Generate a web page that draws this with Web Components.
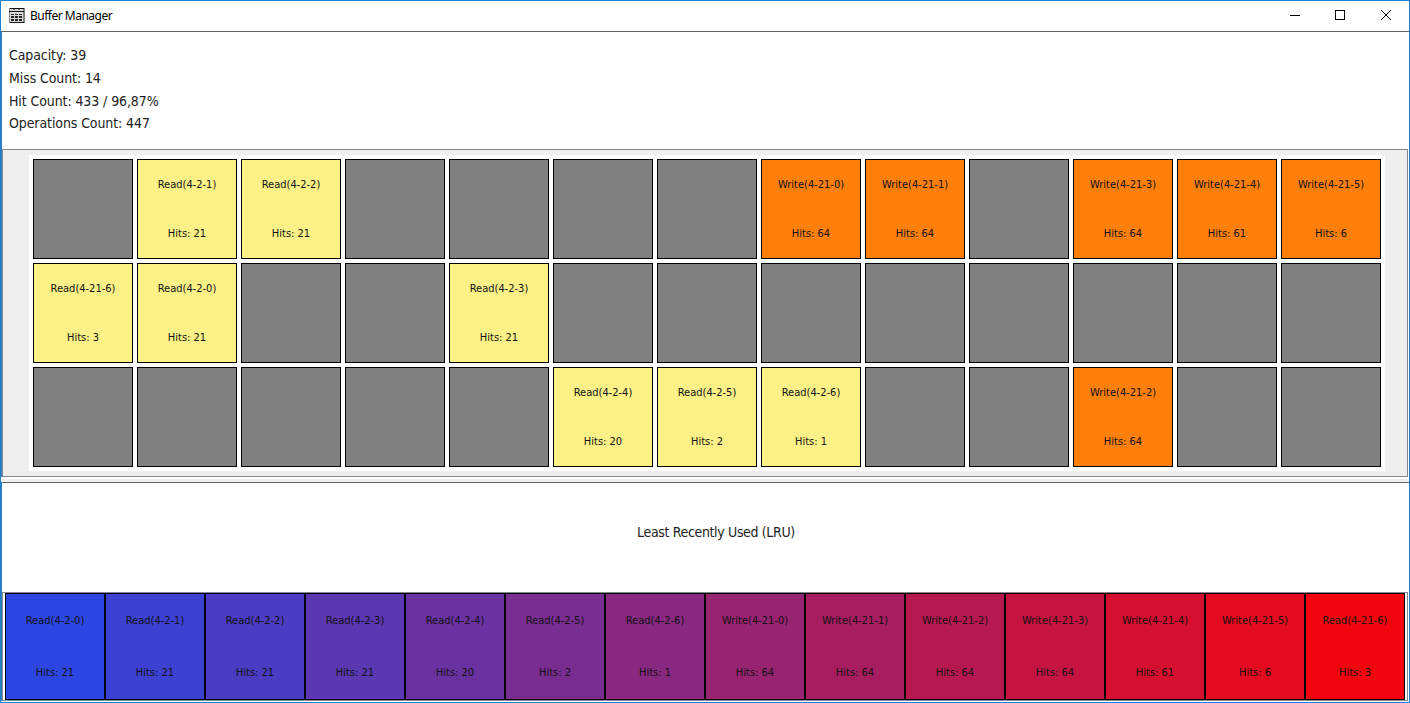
<!DOCTYPE html>
<html lang="en"><head><meta charset="utf-8"><title>Buffer Manager</title>
<style>html,body{margin:0;height:100%;overflow:hidden;background:#fff}</style></head>
<body><buffer-window></buffer-window>
<script>
const FONT = '"DejaVu Sans Condensed","DejaVu Sans",sans-serif';
function define(name, html, init){
  const t = document.createElement('template');
  t.innerHTML = html;
  customElements.define(name, class extends HTMLElement{
    connectedCallback(){
      if(this.shadowRoot) return;
      this.attachShadow({mode:'open'}).append(t.content.cloneNode(true));
      if(init) init(this, this.shadowRoot);
    }
  });
}
define('title-bar', `<style>
:host{display:flex;height:30px;align-items:center;padding:0 13px 0 8px;background:#fff;font:12px "Noto Sans",sans-serif;color:#000;box-sizing:border-box}
.t{flex:1;margin-left:5px;letter-spacing:-.5px;line-height:16px;white-space:nowrap}
svg{display:block}.b{display:flex}.b svg + svg{margin-left:29px}.b svg:last-child{margin-left:30px}
</style>
<svg width="16" height="16" viewBox="0 0 16 16" shape-rendering="crispEdges"><path fill="#808080" d="M0 0h16v15H0z"/><path fill="#ddd" d="M1 1h13v13H1z"/><path fill="#111" d="M1 0h14v1H1zM0 3h15v1H0zM1 14h14v1H1z"/><path fill="#666" d="M4 1h2v1H4zM9 1h2v1H9z"/><path fill="#222" d="M2 6h3v1H2zM6 6h3v1H6zM10 6h3v1h-3zM2 8h3v2H2zM6 8h3v2H6zM10 8h3v2h-3zM2 11h3v2H2zM6 11h3v2H6zM10 11h3v2h-3z"/></svg>
<span class="t"><slot></slot></span>
<div class="b">
<svg width="16" height="16"><path d="M1 7.5h10" stroke="#000" shape-rendering="crispEdges"/></svg>
<svg width="16" height="16"><path d="M1.5 2.5h9v9h-9z" fill="none" stroke="#000" shape-rendering="crispEdges"/></svg>
<svg width="16" height="16"><path d="M1 2l10 10M11 2L1 12" fill="none" stroke="#000"/></svg>
</div>`);
define('stats-panel', `<style>
:host{display:block;height:117px;box-sizing:border-box;padding:12px 0 0 7px;background:#fff}
</style><slot></slot>`);
define('stat-line', `<style>
:host{display:block;font:14px/22.8px ${FONT};color:#222;white-space:nowrap;letter-spacing:-.1px}
</style><slot></slot>`);
define('buffer-cell', `<style>
:host{display:flex;flex-direction:column;align-items:center;box-sizing:border-box;width:100px;height:var(--h,100px);border:1px solid #000;background:var(--bg,#808080);font:11px/14px ${FONT};color:#111;letter-spacing:0;white-space:nowrap;padding-top:var(--pt,18px)}
.h{margin-top:var(--mt,35px)}
</style><span class="n"></span><span class="h"></span>`, (el, root)=>{
  const name = el.getAttribute('name');
  if(!name) return;
  el.style.setProperty('--bg', el.getAttribute('color') || (name[0]==='R' ? '#fbf187' : '#ff7f0b'));
  root.querySelector('.n').textContent = name;
  root.querySelector('.h').textContent = 'Hits: ' + el.getAttribute('hits');
});
define('buffer-grid', `<style>
:host{display:flex;justify-content:center;box-sizing:border-box;height:328px;border:1px solid #828790;background:#efefef;padding:5px 0;margin-right:1px}
.g{display:grid;grid-template-columns:repeat(13,100px);gap:4px;padding:4px;background:#fff;height:308px;margin-left:4px}
</style><div class="g"></div>`, (el, root)=>{
  const cells = {1:['Read(4-2-1)',21],2:['Read(4-2-2)',21],7:['Write(4-21-0)',64],8:['Write(4-21-1)',64],10:['Write(4-21-3)',64],11:['Write(4-21-4)',61],12:['Write(4-21-5)',6],13:['Read(4-21-6)',3],14:['Read(4-2-0)',21],17:['Read(4-2-3)',21],31:['Read(4-2-4)',20],32:['Read(4-2-5)',2],33:['Read(4-2-6)',1],36:['Write(4-21-2)',64]};
  let html = '';
  for(let i=0;i<39;i++) html += cells[i] ? `<buffer-cell name="${cells[i][0]}" hits="${cells[i][1]}"></buffer-cell>` : '<buffer-cell></buffer-cell>';
  root.querySelector('.g').innerHTML = html;
});
define('lru-queue', `<style>
:host{display:flex;box-sizing:border-box;height:109px;border:1px solid #828790;padding:0 1px 0 2px;margin-right:1px;background:#fff;--h:107px;--pt:20px;--mt:38px}
</style>`, (el, root)=>{
  const q = [['Read(4-2-0)',21],['Read(4-2-1)',21],['Read(4-2-2)',21],['Read(4-2-3)',21],['Read(4-2-4)',20],['Read(4-2-5)',2],['Read(4-2-6)',1],['Write(4-21-0)',64],['Write(4-21-1)',64],['Write(4-21-2)',64],['Write(4-21-3)',64],['Write(4-21-4)',61],['Write(4-21-5)',6],['Read(4-21-6)',3]];
  const a=[45,70,226], b=[243,5,15];
  q.forEach(([n,h],i)=>{
    const c = document.createElement('buffer-cell');
    c.setAttribute('name',n); c.setAttribute('hits',h);
    c.setAttribute('color',`rgb(${a.map((v,k)=>Math.round(v+(b[k]-v)*i/13)).join()})`);
    root.append(c);
  });
});
define('lru-title', `<style>
:host{display:flex;justify-content:center;align-items:center;box-sizing:border-box;height:110px;border-top:1px solid #646464;padding:0 0 11px 21px;background:#fff;font:14px/20px ${FONT};color:#222;letter-spacing:-.35px}
</style><slot></slot>`);
define('buffer-window', `<style>
:host{display:flex;flex-direction:column;box-sizing:border-box;width:1410px;height:703px;border:1px solid #1a80d4;background:#fff}
.body{border-top:1px solid #646464;padding-left:1px;background:linear-gradient(#3a7cb4 445px,#fff 445px 450px,#3a7cb4 450px) 0 0/1px 669px no-repeat}
.div{height:5px;box-sizing:border-box;border-top:2px solid #fff;background:#f0f0f0}
</style>
<title-bar>Buffer Manager</title-bar>
<div class="body">
<stats-panel><stat-line>Capacity: 39</stat-line><stat-line>Miss Count: 14</stat-line><stat-line>Hit Count: 433 / 96,87%</stat-line><stat-line>Operations Count: 447</stat-line></stats-panel>
<buffer-grid></buffer-grid><div class="div"></div>
<lru-title>Least Recently Used (LRU)</lru-title>
<lru-queue></lru-queue>
</div>`);
</script></body></html>
